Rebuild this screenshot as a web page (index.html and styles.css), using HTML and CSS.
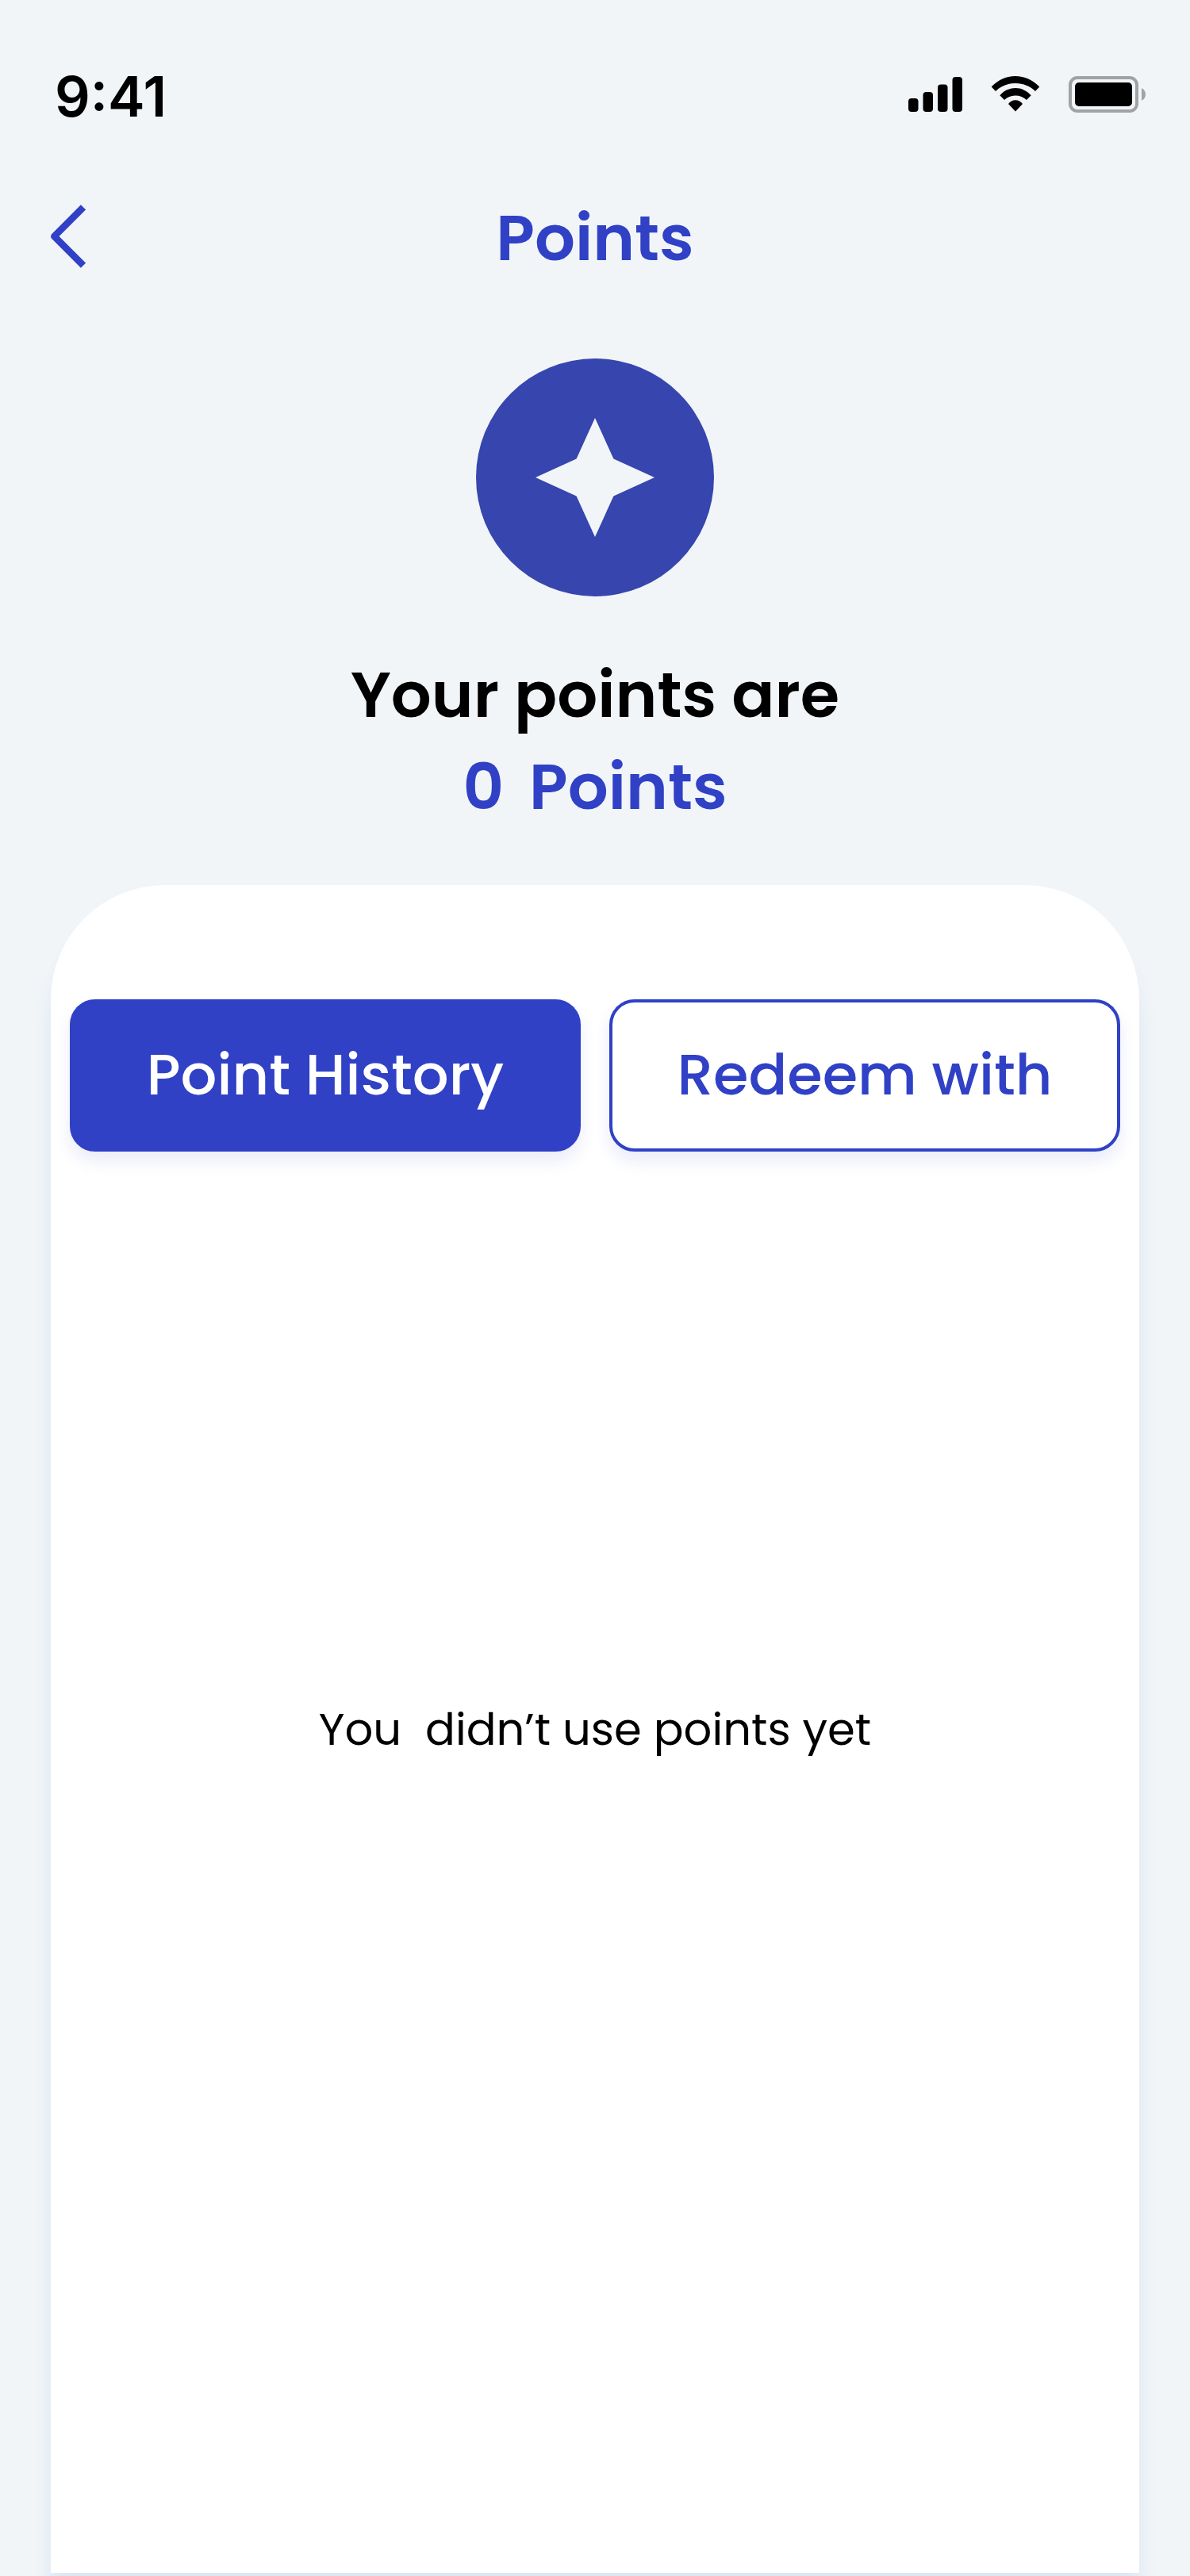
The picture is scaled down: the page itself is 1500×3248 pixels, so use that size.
FILE: index.html
```html
<!DOCTYPE html>
<html lang="en">
<head>
  <meta charset="utf-8">
  <meta name="viewport" content="width=device-width, initial-scale=1">
  <title>Points</title>
  <link rel="stylesheet" href="styles.css">
</head>
<body>
  <div class="screen">
    <div class="status-bar">
      <span class="status-time">9:41</span>
      <div class="status-icons">
        <svg class="icon-signal" viewBox="0 0 68 46" role="img" aria-label="Signal">
          <rect x="0" y="28" width="12.500" height="17" rx="4"/>
          <rect x="18.500" y="20" width="12.500" height="25" rx="4"/>
          <rect x="37" y="10.500" width="12.500" height="34.500" rx="4"/>
          <rect x="55.500" y="1" width="12.500" height="44" rx="4"/>
        </svg>
        <svg class="icon-wifi" viewBox="0 0 62 46" role="img" aria-label="Wi-Fi">
          <path d="M31 9C41 9 49.500 12.700 56 19L61.300 13.500C53 5 42.500 0 31 0S9 5 .700 13.500L6 19C12.500 12.700 21 9 31 9Z"/>
          <path d="M31 24.500C36.500 24.500 41.300 26.500 45 30L50.700 24.300C45.300 18.300 38.300 15 31 15S16.700 18.300 11.300 24.300L17 30C20.700 26.500 25.500 24.500 31 24.500Z"/>
          <path d="M31 44.500L40 35C37.800 32 34.500 30.300 31 30.300S24.200 32 22 35Z"/>
        </svg>
        <svg class="icon-battery" viewBox="0 0 98 46" role="img" aria-label="Battery full">
          <rect x="2" y="2" width="84" height="42" rx="9" fill="none" stroke="#a0a2a4" stroke-width="4"/>
          <rect x="8" y="8" width="72" height="30" rx="5"/>
          <path d="M92 15C95 16.500 97 19.500 97 23S95 29.500 92 31Z" fill="#a0a2a4"/>
        </svg>
      </div>
    </div>

    <header class="top-bar">
      <a class="back" href="#" aria-label="Back">
        <svg class="icon-back" viewBox="0 0 44 80">
          <path d="M41 3.300L4.400 40L41 76.700" fill="none" stroke="#3041c6" stroke-width="8.800" stroke-linejoin="round"/>
        </svg>
      </a>
      <h1 class="title">Points</h1>
    </header>

    <section class="summary">
      <svg class="badge" viewBox="0 0 300 300" aria-hidden="true">
        <circle cx="150" cy="150" r="150" fill="#3745ae"/>
        <path d="M150 75L173.400 126.600L225 150L173.400 173.400L150 225L126.600 173.400L75 150L126.600 126.600Z" fill="#f1f5f8"/>
      </svg>
      <div class="balance">
        <p>Your points are</p>
        <p class="balance-value"><span>0</span><span>Points</span></p>
      </div>
    </section>

    <main class="card">
      <div class="tabs">
        <button class="tab tab-active" type="button">Point History</button>
        <button class="tab" type="button">Redeem with</button>
      </div>
      <p class="empty">You&nbsp; didn’t use points yet</p>
    </main>
  </div>
</body>
</html>
```
FILE: styles.css
```css
* {
  box-sizing: border-box;
}

body {
  margin: 0;
  background: #f1f5f8;
  color: #000;
  font-family: Poppins, Inter, "Liberation Sans", sans-serif;
}

h1,
p {
  margin: 0;
}

.screen {
  display: flex;
  flex-direction: column;
  min-height: 100vh;
  padding-bottom: 4px;
  overflow: hidden;
}

.status-bar {
  display: flex;
  align-items: flex-start;
  justify-content: space-between;
  padding: 80px 55px 0 69px;
}

.status-time {
  font-family: Inter, sans-serif;
  font-size: 70px;
  font-weight: 600;
  line-height: 84px;
}

.status-icons {
  display: flex;
  gap: 36px;
  padding-top: 16px;
}

.status-icons svg {
  display: block;
  height: 46px;
}

.icon-signal {
  width: 68px;
}

.icon-wifi {
  width: 62px;
}

.icon-battery {
  width: 98px;
}

.top-bar {
  display: grid;
  grid-template-columns: 1fr auto 1fr;
  align-items: start;
  padding: 76px 64px 0;
}

.back {
  justify-self: start;
  margin-top: 18px;
}

.icon-back {
  display: block;
  width: 44px;
  height: 80px;
}

.title {
  color: #3041c6;
  font-size: 80px;
  font-weight: 600;
  line-height: 120px;
}

.summary {
  display: flex;
  flex-direction: column;
  align-items: center;
  gap: 66px;
  padding-top: 92px;
}

.badge {
  width: 300px;
  height: 300px;
}

.balance {
  font-size: 80px;
  font-weight: 600;
  line-height: 116px;
  text-align: center;
}

.balance-value {
  display: flex;
  justify-content: center;
  gap: 32px;
  color: #3041c6;
}

.card {
  display: flex;
  flex: 1;
  flex-direction: column;
  margin: 66px 64px 0;
  padding: 144px 24px 0;
  border-radius: 144px 144px 0 0;
  background: #fff;
  box-shadow: 0 32px 24px rgba(40, 85, 200, 0.09);
}

.tabs {
  display: grid;
  grid-template-columns: 1fr 1fr;
  gap: 36px;
}

.tab {
  height: 192px;
  padding: 0 0 2px;
  border: 4px solid #3041c6;
  border-radius: 32px;
  background: #fff;
  box-shadow: 0 12px 20px rgba(48, 65, 198, 0.1);
  color: #3041c6;
  font-family: inherit;
  font-size: 72px;
  font-weight: 500;
}

.tab-active {
  background: #3041c6;
  color: #fff;
}

.empty {
  display: flex;
  flex: 1;
  align-items: center;
  justify-content: center;
  padding-bottom: 334px;
  font-size: 56px;
  line-height: 84px;
}
```
